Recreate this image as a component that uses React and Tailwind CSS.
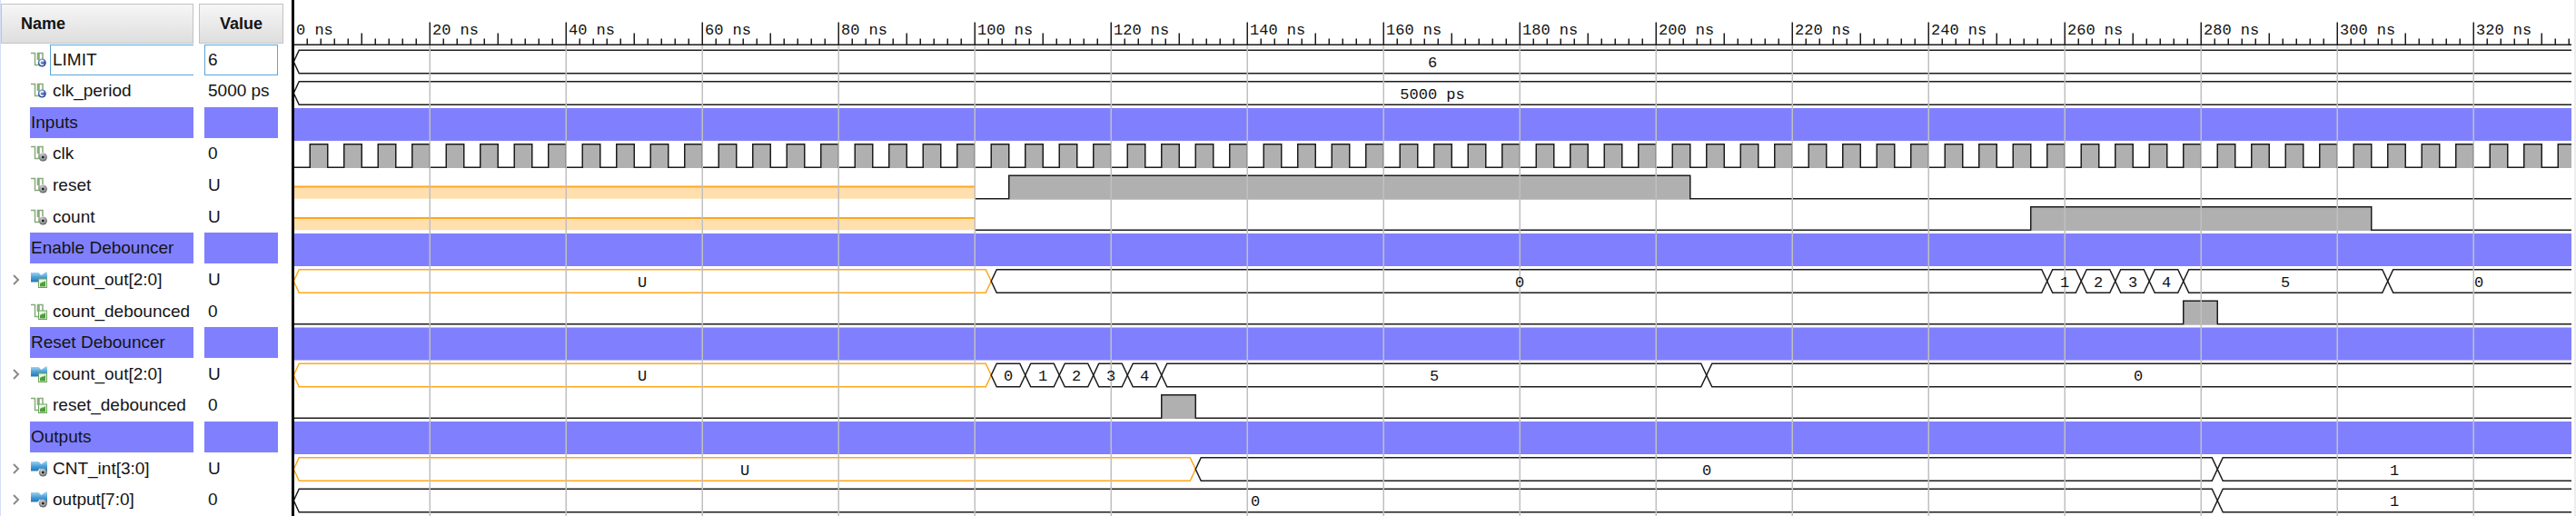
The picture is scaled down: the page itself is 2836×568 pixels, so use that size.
import React from "react";

const SECTION = "section";
const rows = [
  { name: "LIMIT", value: "6", icon: "constant", selected: true, bus: [["6", 0, null]] },
  { name: "clk_period", value: "5000 ps", icon: "constant", bus: [["5000 ps", 0, null]] },
  { name: "Inputs", kind: SECTION },
  { name: "clk", value: "0", icon: "signal", clock: 5 },
  { name: "reset", value: "U", icon: "signal", unknown: 100, high: [105, 205] },
  { name: "count", value: "U", icon: "signal", unknown: 100, high: [255, 305] },
  { name: "Enable Debouncer", kind: SECTION },
  {
    name: "count_out[2:0]", value: "U", icon: "busOut",
    bus: [["U", 0, 102.5], ["0", 102.5, 257.5], ["1", 257.5, 262.5], ["2", 262.5, 267.5], ["3", 267.5, 272.5], ["4", 272.5, 277.5], ["5", 277.5, 307.5], ["0", 307.5, null]],
  },
  { name: "count_debounced", value: "0", icon: "signalOut", unknown: 0, high: [277.5, 282.5] },
  { name: "Reset Debouncer", kind: SECTION },
  {
    name: "count_out[2:0]", value: "U", icon: "busOut",
    bus: [["U", 0, 102.5], ["0", 102.5, 107.5], ["1", 107.5, 112.5], ["2", 112.5, 117.5], ["3", 117.5, 122.5], ["4", 122.5, 127.5], ["5", 127.5, 207.5], ["0", 207.5, null]],
  },
  { name: "reset_debounced", value: "0", icon: "signalOut", unknown: 0, high: [127.5, 132.5] },
  { name: "Outputs", kind: SECTION },
  { name: "CNT_int[3:0]", value: "U", icon: "bus", bus: [["U", 0, 132.5], ["0", 132.5, 282.5], ["1", 282.5, null]] },
  { name: "output[7:0]", value: "0", icon: "bus", bus: [["0", 0, 282.5], ["1", 282.5, null]] },
];

const END = 334.3;
const ROW = 34.5;
const px = (ns) => Math.floor(ns * 5) * 1.5 - 0.75;
const hiY = (i) => 55.25 + ROW * i;
const loY = (i) => 80.75 + ROW * i;

function Icon({ type }) {
  const isBus = type === "bus" || type === "busOut";
  return (
    <svg className="h-[18px] w-[18px] shrink-0" viewBox="0 0 18 18" aria-hidden="true">
      <defs>
        <linearGradient id="busFill" x1="0" y1="0" x2="0" y2="1">
          <stop offset="0" stopColor="#a8d6f2" />
          <stop offset="0.5" stopColor="#4a9fd8" />
          <stop offset="1" stopColor="#1f72b4" />
        </linearGradient>
        <radialGradient id="grayBall" cx="0.4" cy="0.3" r="0.8">
          <stop offset="0" stopColor="#d8d8d8" />
          <stop offset="1" stopColor="#4d4d4d" />
        </radialGradient>
        <radialGradient id="blueBall" cx="0.4" cy="0.25" r="0.8">
          <stop offset="0" stopColor="#a9c0ea" />
          <stop offset="0.6" stopColor="#3c5ca6" />
          <stop offset="1" stopColor="#243f86" />
        </radialGradient>
      </defs>
      {isBus ? (
        <path d="M0 1H8.5L11.5 4L16 0.5H18V12H13L10 8.5L7.5 11.5H0Z" fill="url(#busFill)" />
      ) : (
        <path d="M0 1.5H4.5V14.5H9M7.5 9V1.5H13V8M9 1.5V14" fill="none" stroke="#86ab7c" strokeWidth="1.5" />
      )}
      {type === "constant" && (
        <>
          <circle cx="12.3" cy="12" r="4.5" fill="url(#blueBall)" />
          <path d="M14.2 10.4A2.4 2.4 0 1 0 14.2 13.6" fill="none" stroke="#fff" strokeWidth="1.3" />
        </>
      )}
      {(type === "signal" || type === "bus") && (
        <>
          <circle cx="13.3" cy="13" r="4.6" fill="url(#grayBall)" />
          <circle cx="13.3" cy="13" r="2.6" fill="#b9b9b9" />
          <circle cx="13.3" cy="13" r="1.5" fill="#222" />
        </>
      )}
      {(type === "signalOut" || type === "busOut") && (
        <>
          <rect x="8.5" y="8" width="9" height="9.5" fill="#eaf5e4" stroke="#6aa55b" strokeWidth="1" />
          <path d="M10 16.5V13L12.5 11.5H14L16 10V16.5Z" fill="#4f9e3c" />
        </>
      )}
    </svg>
  );
}

function SignalTable() {
  return (
    <table className="w-[320px] shrink-0 table-fixed border-collapse text-[19px] leading-[22px] text-[#141414]">
      <colgroup>
        <col className="w-[212px]" />
        <col className="w-[6px]" />
        <col className="w-[93px]" />
        <col />
      </colgroup>
      <thead>
        <tr className="h-12 align-bottom text-[18px]">
          <th scope="col" className="p-0 text-left font-bold">
            <div className="flex h-11 items-center border border-[#c3c3c3] bg-linear-to-b from-[#f6f6f6] to-[#dededf] pl-[21px]">Name</div>
          </th>
          <td className="p-0" />
          <th scope="col" className="p-0 font-bold">
            <div className="flex h-11 items-center justify-center border border-[#c3c3c3] bg-linear-to-b from-[#f6f6f6] to-[#dededf]">Value</div>
          </th>
          <td className="p-0" />
        </tr>
      </thead>
      <tbody>
        {rows.map((r, i) =>
          r.kind === SECTION ? (
            <tr key={i} className="h-[34px] odd:h-[35px]">
              <th scope="row" className="p-0 text-left font-normal">
                <div className="ml-8 flex h-[34px] items-center bg-[#8080ff] pl-px whitespace-nowrap">{r.name}</div>
              </th>
              <td className="p-0" />
              <td className="p-0">
                <div className="mx-[6px] h-[34px] bg-[#8080ff]" />
              </td>
              <td className="p-0" />
            </tr>
          ) : (
            <tr key={i} className="h-[34px] odd:h-[35px]">
              <th scope="row" className="p-0 text-left font-normal">
                <div className="flex h-[34px] items-center">
                  <span className="flex w-[33px] shrink-0 items-center pl-[13px]">
                    {r.icon.startsWith("bus") && (
                      <button type="button" aria-label={"Expand " + r.name} className="block h-3 w-2">
                        <svg className="h-3 w-2" viewBox="0 0 8 12" fill="none" stroke="#8a8a8a" strokeWidth="2" aria-hidden="true">
                          <path d="M1 1L6 6L1 11" />
                        </svg>
                      </button>
                    )}
                  </span>
                  <Icon type={r.icon} />
                  <span
                    className={
                      r.selected
                        ? "ml-[3px] flex h-[34px] flex-1 items-center border border-r-0 border-[#5ba5d8] pl-[2px]"
                        : "ml-[3px] flex h-[34px] flex-1 items-center pl-[3px] whitespace-nowrap"
                    }
                  >
                    {r.name}
                  </span>
                </div>
              </th>
              <td className="p-0" />
              <td className="p-0">
                <div
                  className={
                    r.selected
                      ? "mx-[6px] flex h-[34px] items-center border border-[#5ba5d8] pl-[3px]"
                      : "mx-[6px] flex h-[34px] items-center pl-1 whitespace-nowrap"
                  }
                >
                  {r.value}
                </div>
              </td>
              <td className="p-0" />
            </tr>
          )
        )}
      </tbody>
    </table>
  );
}

function Bus({ i, segments }) {
  const hi = hiY(i);
  const lo = loY(i);
  const mid = (hi + lo) / 2;
  return segments.map(([label, from, to], k) => {
    const a = px(from);
    const b = to === null ? 4000 : px(to);
    const d =
      to === null
        ? `M${b} ${hi}H${a + 6}L${a} ${mid}L${a + 6} ${lo}H${b}`
        : `M${a + 6} ${hi}H${b - 6}L${b} ${mid}L${b - 6} ${lo}H${a + 6}L${a} ${mid}Z`;
    return <path key={k} d={d} fill="none" stroke={label === "U" ? "#ffa71a" : "#1c1c1c"} strokeWidth="1.5" />;
  });
}

function BusLabels({ i, segments }) {
  const baseline = Math.round((hiY(i) + loY(i)) / 2) + 6;
  return segments.map(([label, from, to], k) => (
    <text
      key={k}
      x={Math.round((px(from) + px(to === null ? END : to)) / 2)}
      y={baseline}
      textAnchor="middle"
      fill="#111111"
    >
      {label}
    </text>
  ));
}

function Level({ i, row }) {
  const hi = hiY(i);
  const lo = loY(i);
  const u = px(row.unknown);
  const a = px(row.high[0]);
  const b = px(row.high[1]);
  return (
    <g>
      {row.unknown > 0 && (
        <>
          <rect x="0" y={hi + 12} width={u} height={lo - hi - 12} fill="#ffdfad" />
          <path d={`M0 ${hi + 12.25}H${u}`} stroke="#ffa71a" strokeWidth="2" />
        </>
      )}
      <rect x={a} y={hi} width={b - a} height={lo - hi + 0.75} fill="#b0b0b0" />
      <path d={`M${u} ${lo}H${a}V${hi}H${b}V${lo}H4000`} fill="none" stroke="#1c1c1c" strokeWidth="1.5" />
      <path d={`M${a + 1} ${lo}H${b - 1}`} stroke="#b0b0b0" strokeWidth="1.5" />
    </g>
  );
}

function Clock({ i, period }) {
  const hi = hiY(i);
  const lo = loY(i);
  let line = `M0 ${lo}`;
  let fill = "";
  for (let t = 0; t < 500; t += period) {
    const a = px(t + period / 2);
    const b = px(t + period);
    line += `H${a}V${hi}H${b}V${lo}`;
    fill += `M${a} ${lo + 0.75}V${hi}H${b}V${lo + 0.75}Z`;
  }
  return (
    <g>
      <path d={fill} fill="#b0b0b0" />
      <path d={line} fill="none" stroke="#1c1c1c" strokeWidth="1.5" />
    </g>
  );
}

function Waveforms() {
  const ticks = [];
  for (let t = 2; t < END; t += 2) ticks.push(t);
  const majors = ticks.filter((t) => t % 20 === 0);
  return (
    <svg
      className="h-[568px] min-w-0 flex-1 overflow-hidden font-['Liberation_Mono','Courier_New',monospace] text-[17px]"
      role="img"
      aria-label="Waveforms"
    >
      <rect x="0" y="50" width="100%" height="3" fill="#f2f2f2" />
      <path
        d={ticks.map((t) => `M${px(t)} ${t % 20 === 0 ? 24.5 : t % 10 === 0 ? 36.5 : 42.5}V49`).join("") + "M0 49.25H4000"}
        fill="none"
        stroke="#1c1c1c"
        strokeWidth="1.5"
      />
      {[0, ...majors].map((t) => (
        <text key={t} x={Math.round(px(t)) + 3} y="38" fill="#111111">
          {t + " ns"}
        </text>
      ))}
      {rows.map((r, i) => {
        if (r.kind === SECTION) return <rect key={i} x="0" y={50 + ROW * i} width="100%" height="36" fill="#8080ff" />;
        if (r.bus) return <Bus key={i} i={i} segments={r.bus} />;
        if (r.clock) return <Clock key={i} i={i} period={r.clock} />;
        return <Level key={i} i={i} row={r} />;
      })}
      <path d={majors.map((t) => `M${px(t)} 50V568`).join("")} stroke="#c0c0c0" strokeWidth="1.5" />
      {rows.map((r, i) => r.bus && <BusLabels key={i} i={i} segments={r.bus} />)}
    </svg>
  );
}

export default function App() {
  return (
    <main className="flex w-full items-stretch overflow-hidden border-l border-[#d5e0f5] bg-white font-['Liberation_Sans',Arial,sans-serif]">
      <SignalTable />
      <div className="w-[3px] shrink-0 bg-black" />
      <Waveforms />
      <div className="ml-[3px] w-[2px] shrink-0 bg-[#ededed]" />
    </main>
  );
}
